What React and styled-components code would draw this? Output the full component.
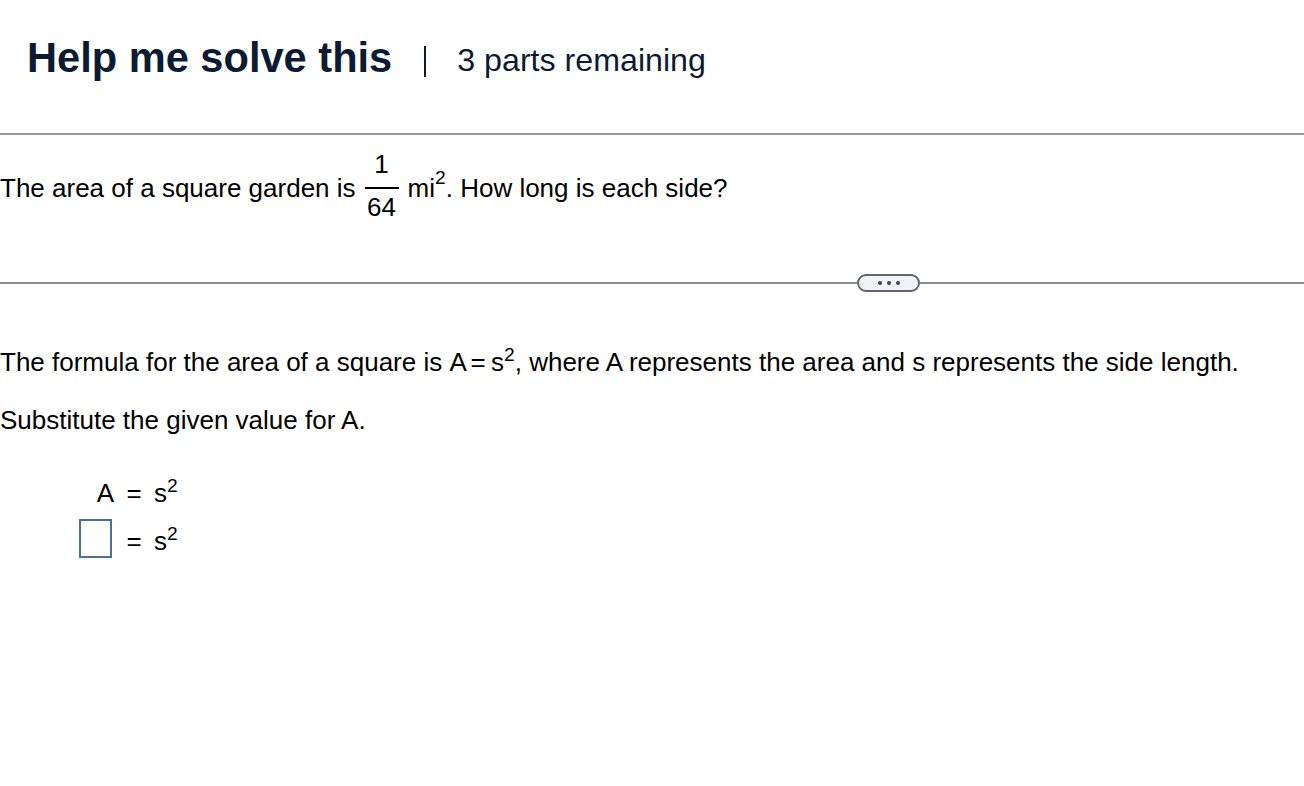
import React from "react";
import styled, { createGlobalStyle } from "styled-components";

const Global = createGlobalStyle`
  html, body { margin: 0; padding: 0; background: #fff; }
  body { font-family: "Liberation Sans", Arial, Helvetica, sans-serif; color: #000; }
`;

const Page = styled.div`
  width: 1304px;
  display: flex;
  flex-direction: column;
`;

const Header = styled.header`
  height: 133px;
  display: flex;
  align-items: center;
  padding: 0 0 18px 27px;
  box-sizing: border-box;
  color: #0c1a33;
`;

const Title = styled.h1`
  margin: 0;
  font-size: 41.6px;
  font-weight: 700;
`;

const Sep = styled.span`
  display: inline-block;
  width: 2px;
  height: 31px;
  background: #0c1a33;
  margin: 8px 31px 0 32px;
`;

const Remaining = styled.span`
  font-size: 32.2px;
  margin-top: 6px;
`;

const Rule = styled.hr`
  margin: 0;
  border: 0;
  height: 2px;
  background: #9a9a9a;
`;

const Question = styled.div`
  height: 147px;
  padding-top: 16px;
  box-sizing: border-box;
  font-size: 26px;
`;

const Line = styled.div`
  display: flex;
  align-items: center;
  white-space: pre;
  line-height: 30px;
`;

const Frac = styled.span`
  display: inline-flex;
  flex-direction: column;
  align-items: center;
  margin: 0 9px 0 9px;
  padding-bottom: 5px;
  line-height: 26px;
`;

const FracBar = styled.span`
  width: 34px;
  height: 2px;
  background: #000;
  margin: 10px 0 5px;
`;

const Sup = styled.sup`
  font-size: 0.74em;
  vertical-align: baseline;
  position: relative;
  top: -0.52em;
  line-height: 0;
`;

const DividerRow = styled.div`
  display: flex;
  align-items: center;
  height: 18px;
  margin-top: -8px;
`;

const DividerLine = styled.div`
  flex: ${(p) => (p.$fixed ? `0 0 ${p.$fixed}px` : "1")};
  height: 2px;
  background: #8c8c8c;
`;

const MoreButton = styled.button`
  width: 63px;
  height: 18px;
  border: 2px solid #5f6670;
  border-radius: 9px;
  background: #f1f3f6;
  box-sizing: border-box;
  padding: 0;
  display: flex;
  align-items: center;
  justify-content: center;
  gap: 5px;
`;

const Dot = styled.span`
  width: 4px;
  height: 4px;
  border-radius: 50%;
  background: #3e444c;
`;

const Body = styled.section`
  padding-top: 55px;
  font-size: 26px;
  display: flex;
  flex-direction: column;
`;

const Para = styled.p`
  margin: 0 0 ${(p) => p.$gap || 0}px;
  line-height: 30px;
  white-space: nowrap;
`;

const Tight = styled.span`
  letter-spacing: -1px;
  margin-right: 1px;
`;

const Work = styled.div`
  display: grid;
  grid-template-columns: 35px 16px auto;
  column-gap: 12px;
  grid-auto-rows: 48px;
  align-items: center;
  margin-left: 79px;
  margin-top: 34px;
  font-size: 26px;
  line-height: 48px;
`;

const Cell = styled.span`
  justify-self: ${(p) => p.$align || "start"};
`;

const AnswerBox = styled.span`
  width: 33px;
  height: 39px;
  box-sizing: border-box;
  border: 2px solid #4a6ea8;
  display: block;
  align-self: start;
  margin-top: 2px;
`;

export default function App() {
  return (
    <Page>
      <Global />
      <Header>
        <Title>Help me solve this</Title>
        <Sep />
        <Remaining>3 parts remaining</Remaining>
      </Header>
      <Rule />
      <Question>
        <Line>
          The area of a square garden is
          <Frac>
            <span>1</span>
            <FracBar />
            <span>64</span>
          </Frac>
          mi<Sup>2</Sup>. How long is each side?
        </Line>
      </Question>
      <DividerRow>
        <DividerLine />
        <MoreButton aria-label="more">
          <Dot />
          <Dot />
          <Dot />
        </MoreButton>
        <DividerLine $fixed={384} />
      </DividerRow>
      <Body>
        <Para $gap={28}>
          The formula for the area of a square is <Tight>A = s</Tight>
          <Sup>2</Sup>, where A represents the area and s represents the side length.
        </Para>
        <Para>Substitute the given value for A.</Para>
        <Work>
          <Cell $align="end">A</Cell>
          <Cell $align="center">=</Cell>
          <Cell>
            s<Sup>2</Sup>
          </Cell>
          <AnswerBox />
          <Cell $align="center">=</Cell>
          <Cell>
            s<Sup>2</Sup>
          </Cell>
        </Work>
      </Body>
    </Page>
  );
}
